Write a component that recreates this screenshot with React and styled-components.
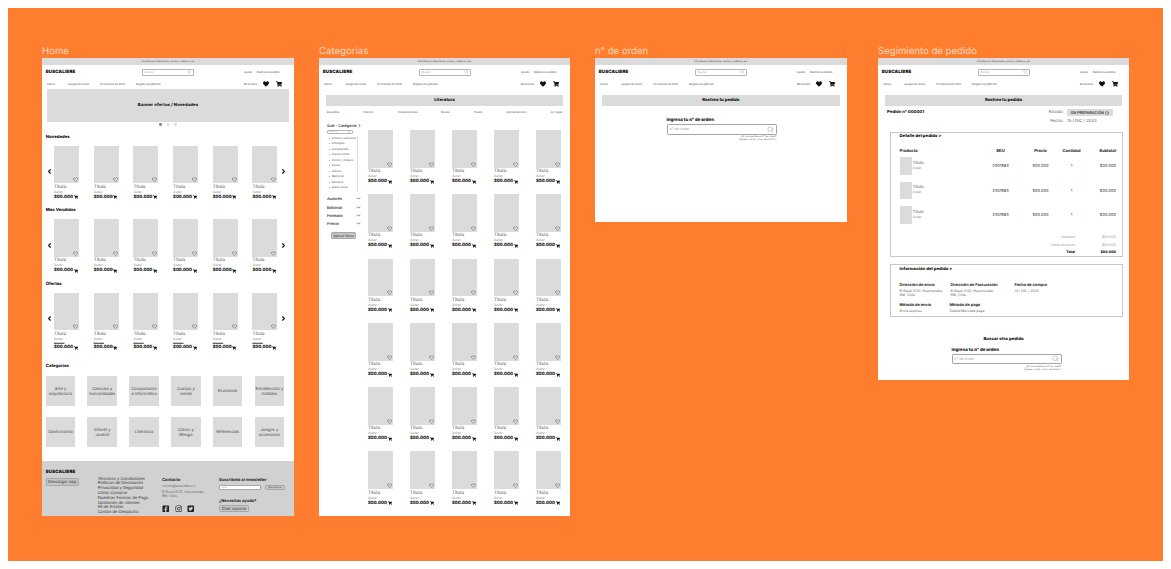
import React from "react";
import styled, { createGlobalStyle } from "styled-components";
import { ChevronLeft, ChevronRight, ChevronDown, Search, Heart, Clock } from "lucide-react";
import { FaHeart, FaShoppingCart, FaFacebookSquare, FaInstagram, FaTwitterSquare } from "react-icons/fa";

const Global = createGlobalStyle`
  html, body { background: #fff; }
  body {
    margin: 8px;
    font-family: "Inter", "Liberation Sans", sans-serif;
    color: #222;
    text-rendering: geometricPrecision;
  }
  * { box-sizing: border-box; }
`;

const Canvas = styled.div`
  position: relative;
  width: 1155px;
  height: 553px;
  background: #ff7d2f;
  overflow: hidden;
`;
const FrameWrap = styled.section`
  position: absolute;
  left: ${(p) => p.$x - 8}px;
  top: ${(p) => p.$y - 8}px;
  width: ${(p) => p.$w}px;
`;
const FrameTitle = styled.h2`
  position: absolute;
  left: 0;
  top: -13.5px;
  margin: 0;
  font-size: 9.6px;
  line-height: 13px;
  font-weight: 400;
  color: #ffd9bc;
  white-space: nowrap;
`;
const Sheet = styled.div`
  height: ${(p) => p.$h}px;
  background: #fff;
  overflow: hidden;
  display: flex;
  flex-direction: column;
`;
const Announce = styled.div`
  height: 7px;
  flex: none;
  background: #dbdbdb;
  font-size: 2.5px;
  line-height: 7px;
  text-align: center;
  color: #333;
`;
const TopRow = styled.div`
  height: 14px;
  flex: none;
  display: grid;
  grid-template-columns: 96.3px 102px 1fr;
  align-items: center;
  padding-left: 3.7px;
`;
const Logo = styled.div`
  font-size: 4.5px;
  line-height: 5px;
  font-weight: 900;
  letter-spacing: 0.1px;
  color: #111;
`;
const SearchBox = styled.div`
  width: 52px;
  height: 7px;
  border: 0.6px solid #b5b5b5;
  border-radius: 1px;
  display: flex;
  align-items: center;
  justify-content: space-between;
  padding: 0 1.5px;
  font-size: 2.8px;
  color: #aaa;
  svg { color: #aaa; }
`;
const TinyLinks = styled.div`
  display: flex;
  gap: 5px;
  font-size: 2.7px;
  color: #444;
  white-space: nowrap;
`;
const NavRow = styled.div`
  height: 10px;
  flex: none;
  display: grid;
  grid-template-columns: 21px 32px 36px 108px 1fr;
  align-items: center;
  padding-left: 5px;
  font-size: 2.7px;
  color: #444;
  white-space: nowrap;
`;
const NavRight = styled.div`
  display: flex;
  align-items: center;
  gap: 6.5px;
  svg { color: #111; }
`;

const Banner = styled.div`
  height: 32.5px;
  margin: 0 5px;
  flex: none;
  background: #dbdbdb;
  display: flex;
  align-items: center;
  justify-content: center;
  font-size: 4.2px;
  font-weight: 800;
  letter-spacing: 0.1px;
  color: #111;
`;
const Dots = styled.div`
  height: 6px;
  margin-bottom: 7.5px;
  flex: none;
  display: flex;
  justify-content: center;
  align-items: center;
  gap: 5.2px;
`;
const Dot = styled.span`
  width: 2.4px;
  height: 2.4px;
  border-radius: 50%;
  background: ${(p) => (p.$on ? "#888" : "#dbdbdb")};
`;
const SectionLabel = styled.h3`
  margin: ${(p) => p.$top || 0}px 0 ${(p) => p.$bottom}px 3.7px;
  font-size: 4.3px;
  line-height: 5px;
  font-weight: 800;
  color: #111;
`;
const Carousel = styled.div`
  display: flex;
  align-items: center;
  padding-left: 3px;
  svg { color: #111; flex: none; }
`;
const ArrowSlot = styled.div`
  width: ${(p) => p.$w}px;
  height: 37.5px;
  flex: none;
  align-self: flex-start;
  display: flex;
  align-items: center;
  justify-content: center;
  padding-top: 15px;
`;
const ProductRow = styled.div`
  display: flex;
  gap: 14.7px;
`;
const ProductGridWrap = styled.div`
  display: grid;
  grid-template-columns: repeat(5, 25px);
  column-gap: 17px;
  row-gap: 10.1px;
  align-content: start;
  margin-top: 8px;
`;
const Product = styled.article`
  width: 25px;
`;
const Cover = styled.div`
  position: relative;
  height: 37.7px;
  background: #dbdbdb;
  svg { position: absolute; right: 1px; bottom: 1px; color: #444; }
`;
const PTitle = styled.div`
  margin-top: 1.5px;
  font-size: 4.6px;
  line-height: 5px;
  color: #555;
`;
const PAuthor = styled.div`
  font-size: 3.4px;
  line-height: 5px;
  color: #888;
`;
const OldPrice = styled.div`
  font-size: 2.4px;
  line-height: 3.5px;
  font-weight: 700;
  color: #666;
  text-decoration: line-through;
`;
const PriceRow = styled.div`
  display: flex;
  align-items: center;
  justify-content: space-between;
  width: 23.5px;
  font-size: 4.3px;
  line-height: 5px;
  font-weight: 800;
  color: #111;
  white-space: nowrap;
  svg { color: #111; }
`;

const CategoryGrid = styled.div`
  display: grid;
  grid-template-columns: repeat(6, 29.6px);
  column-gap: 12.2px;
  row-gap: 11px;
  grid-auto-rows: 30px;
  margin: 0 0 14px 3.7px;
`;
const CategoryTile = styled.div`
  background: #dbdbdb;
  display: flex;
  align-items: center;
  justify-content: center;
  text-align: center;
  font-size: 4.1px;
  line-height: 5px;
  color: #444;
`;
const Footer = styled.footer`
  flex: 1;
  background: #d1d1d1;
  display: grid;
  grid-template-columns: 52px 64.3px 57px 1fr;
  padding-left: 3.7px;
`;
const FootCol = styled.div`
  padding-top: ${(p) => p.$top}px;
`;
const FootLink = styled.div`
  font-size: 4.15px;
  line-height: 4.8px;
  color: #333;
  white-space: nowrap;
`;
const FootHead = styled.div`
  margin-top: ${(p) => p.$top || 0}px;
  font-size: 4.05px;
  line-height: 5px;
  font-weight: 700;
  color: #222;
  white-space: nowrap;
`;
const FootSmall = styled.div`
  margin-top: ${(p) => p.$top || 0}px;
  font-size: 3.3px;
  line-height: 4px;
  color: #666;
  white-space: nowrap;
`;
const GrayButton = styled.div`
  display: flex;
  align-items: center;
  justify-content: center;
  height: ${(p) => p.$h}px;
  width: ${(p) => p.$w}px;
  margin-top: ${(p) => p.$top || 0}px;
  background: #c6c6c6;
  border: 0.5px solid #a8a8a8;
  border-radius: 1.2px;
  font-size: ${(p) => p.$fs}px;
  color: #333;
  white-space: nowrap;
`;
const SocialRow = styled.div`
  display: flex;
  gap: 5px;
  margin-top: 6.5px;
  padding-left: 0.5px;
  svg { color: #222; }
`;
const NewsRow = styled.div`
  display: flex;
  align-items: center;
  gap: 4px;
  margin-top: 2.5px;
`;
const NewsInput = styled.div`
  width: 42px;
  height: 5.4px;
  background: #fff;
  border: 0.4px solid #aaa;
  font-size: 2.2px;
  line-height: 4.6px;
  padding-left: 1.5px;
  color: #aaa;
`;

const PageBar = styled.div`
  height: 11px;
  margin: 6px 7px 0;
  flex: none;
  background: #dbdbdb;
  display: flex;
  align-items: center;
  justify-content: center;
  font-size: 4.3px;
  font-weight: 800;
  color: #111;
`;
const SubNav = styled.div`
  display: grid;
  grid-template-columns: 36px 35px 43px 33px 32px 45px auto;
  margin: 4px 0 0 8px;
  font-size: 2.6px;
  line-height: 5px;
  color: #555;
  white-space: nowrap;
`;
const CatBody = styled.div`
  display: flex;
  margin-top: 7px;
`;
const Sidebar = styled.aside`
  width: 49px;
  flex: none;
  padding-left: 8px;
`;
const FilterHead = styled.div`
  display: flex;
  align-items: center;
  justify-content: space-between;
  height: ${(p) => p.$h || 8.2}px;
  width: ${(p) => p.$w || 34}px;
  font-size: 3.9px;
  font-weight: 600;
  color: #333;
  white-space: nowrap;
  svg { color: #222; flex: none; }
`;
const MiniSearch = styled(SearchBox)`
  width: 26px;
  height: 4.8px;
  margin-top: 0.5px;
  font-size: 2.4px;
`;
const SubList = styled.ul`
  position: relative;
  list-style: none;
  margin: 1.5px 0 4px;
  padding: 0 0 0 4.7px;
  width: 31px;
  &::after {
    content: "";
    position: absolute;
    right: 0;
    top: 0;
    width: 1px;
    height: 100%;
    background: #ddd;
  }
`;
const SubItem = styled.li`
  position: relative;
  font-size: 2.6px;
  line-height: 5.5px;
  color: #555;
  white-space: nowrap;
  &::before {
    content: "";
    position: absolute;
    left: -2.8px;
    top: 2.2px;
    width: 1px;
    height: 1px;
    border-radius: 50%;
    background: #888;
  }
`;
const FilterAction = styled.div`
  margin: 4.5px 0 0 4px;
`;
const GridArea = styled.div`
  margin-left: 0;
`;

const FormBlock = styled.div`
  width: 110px;
  margin: ${(p) => p.$top}px 0 0 ${(p) => p.$left}px;
`;
const FormLabel = styled.div`
  font-size: 4.4px;
  line-height: 6px;
  font-weight: 800;
  color: #111;
  white-space: nowrap;
`;
const OrderInput = styled.div`
  height: 10.5px;
  border: 0.6px solid #a5a5a5;
  border-radius: 1.2px;
  display: flex;
  align-items: center;
  justify-content: space-between;
  padding: 0 1.2px 0 2px;
  font-size: 3.6px;
  color: #aaa;
  svg { color: #999; }
`;
const FormHint = styled.div`
  margin-top: 1.6px;
  text-align: right;
  font-size: 2.4px;
  line-height: 2.9px;
  color: #444;
`;

const OrderHead = styled.div`
  display: flex;
  justify-content: space-between;
  padding: 3px 16px 0 9px;
`;
const OrderId = styled.div`
  font-size: 4.2px;
  line-height: 7px;
  font-weight: 800;
  color: #111;
`;
const OrderMeta = styled.div`
  display: grid;
  grid-template-columns: auto 46px;
  column-gap: 3.5px;
  row-gap: 1.5px;
  grid-auto-rows: 7px;
  align-items: center;
  font-size: 4.2px;
  color: #555;
`;
const MetaLabel = styled.div`
  text-align: right;
`;
const Badge = styled.div`
  height: 7px;
  background: #dbdbdb;
  border-radius: 1px;
  display: flex;
  align-items: center;
  justify-content: center;
  gap: 1px;
  font-size: 3.8px;
  font-weight: 600;
  color: #333;
  white-space: nowrap;
`;
const InfoCard = styled.div`
  margin: ${(p) => p.$top}px 6.5px 0 12px;
  height: ${(p) => p.$h}px;
  border: 0.7px solid #c8c8c8;
  padding: ${(p) => p.$pad}px 5.5px 0 8.5px;
  flex: none;
`;
const CardTitle = styled.div`
  height: 6px;
  font-size: 4.3px;
  line-height: 6px;
  font-weight: 800;
  color: #111;
`;
const TableRow = styled.div`
  display: grid;
  grid-template-columns: 86px 30px 50px 12px 1fr;
  align-items: center;
  height: ${(p) => p.$h}px;
  margin-top: ${(p) => p.$top}px;
  font-size: ${(p) => (p.$head ? 4.1 : 4)}px;
  font-weight: ${(p) => (p.$head ? 700 : 400)};
  color: ${(p) => (p.$head ? "#222" : "#444")};
`;
const Cell = styled.div`
  justify-self: ${(p) => p.$align || "center"};
  white-space: nowrap;
`;
const ProductCell = styled.div`
  display: flex;
  align-items: center;
  gap: 1.3px;
`;
const Thumb = styled.div`
  width: 12px;
  height: 17.5px;
  background: #dbdbdb;
`;
const ThumbTitle = styled.div`
  font-size: 4.2px;
  line-height: 5px;
  color: #555;
`;
const ThumbAuthor = styled.div`
  font-size: 3.4px;
  line-height: 5px;
  color: #888;
`;
const Totals = styled.div`
  display: grid;
  grid-template-columns: 1fr 41px;
  grid-auto-rows: 7.25px;
  align-items: center;
  margin-top: 10.3px;
  font-size: 3.5px;
  color: #999;
  font-weight: 400;
  & > :nth-last-child(-n + 2) { color: #111; font-weight: 800; }
`;
const TotalCell = styled.div`
  text-align: right;
`;
const InfoRow = styled.div`
  display: flex;
  margin-top: ${(p) => p.$top}px;
`;
const InfoCol = styled.div`
  width: ${(p) => p.$w}px;
  flex: none;
`;
const InfoLabel = styled.div`
  font-size: 3.9px;
  line-height: 5px;
  font-weight: 700;
  color: #222;
  white-space: nowrap;
`;
const InfoText = styled.div`
  margin-top: 2px;
  font-size: 3.4px;
  line-height: 4px;
  color: #666;
  white-space: nowrap;
`;
const OtherTitle = styled.div`
  margin-top: 20px;
  text-align: center;
  font-size: 4.3px;
  line-height: 5px;
  font-weight: 800;
  color: #111;
`;

const Header = () => (
  <>
    <Announce>Información importante: envíos, cambios, etc</Announce>
    <TopRow>
      <Logo>BUSCALIBRE</Logo>
      <SearchBox>
        <span>Buscar</span>
        <Search size={4} strokeWidth={2} />
      </SearchBox>
      <TinyLinks>
        <span>Ayuda</span>
        <span>Rastrea tu pedido</span>
      </TinyLinks>
    </TopRow>
    <NavRow>
      <span>Libros</span>
      <span>Juegos de mesa</span>
      <span>Te Interesa de Chile</span>
      <span>Regala una giftcard</span>
      <NavRight>
        <span>Mi Cuenta</span>
        <FaHeart size={6} />
        <FaShoppingCart size={6} />
      </NavRight>
    </NavRow>
  </>
);

const ProductCard = ({ sale }) => (
  <Product>
    <Cover>
      <Heart size={5} strokeWidth={2} />
    </Cover>
    <PTitle>Título</PTitle>
    <PAuthor>Autor</PAuthor>
    {sale && <OldPrice>$00.000</OldPrice>}
    <PriceRow>
      <span>$00.000</span>
      <FaShoppingCart size={4} />
    </PriceRow>
  </Product>
);

const ProductCarousel = ({ sale }) => (
  <Carousel>
    <ArrowSlot $w={9}>
      <ChevronLeft size={7} strokeWidth={4} />
    </ArrowSlot>
    <ProductRow>
      {Array.from({ length: 6 }, (_, i) => (
        <ProductCard key={i} sale={sale} />
      ))}
    </ProductRow>
    <ArrowSlot $w={13}>
      <ChevronRight size={7} strokeWidth={4} />
    </ArrowSlot>
  </Carousel>
);

const CATEGORIES = [
  ["Arte y", "arquitectura"],
  ["Ciencias y", "humanidades"],
  ["Computación", "e informática"],
  ["Cuerpo y", "mente"],
  ["Economía"],
  ["Entretención y", "hobbies"],
  ["Gastronomía"],
  ["Infantil y", "Juvenil"],
  ["Literatura"],
  ["Cómic y", "Manga"],
  ["Referencias"],
  ["Juegos y", "accesorios"],
];
const LINKS = [
  "Términos y Condiciones",
  "Políticas de Devolución",
  "Privacidad y Seguridad",
  "Cómo Comprar",
  "Nuestras Formas de Pago",
  "Opiniones de clientes",
  "Fe de Erratas",
  "Costos de Despacho",
];

const HomeFrame = () => (
  <FrameWrap $x={42} $y={58} $w={252}>
    <FrameTitle>Home</FrameTitle>
    <Sheet $h={458}>
      <Header />
      <Banner>Banner ofertas / Novedades</Banner>
      <Dots>
        <Dot $on />
        <Dot />
        <Dot />
      </Dots>
      <SectionLabel $bottom={5.5}>Novedades</SectionLabel>
      <ProductCarousel />
      <SectionLabel $top={8.7} $bottom={5.8}>Más Vendidos</SectionLabel>
      <ProductCarousel />
      <SectionLabel $top={8.5} $bottom={5.8}>Ofertas</SectionLabel>
      <ProductCarousel sale />
      <SectionLabel $top={13.3} $bottom={7}>Categorías</SectionLabel>
      <CategoryGrid>
        {CATEGORIES.map((lines) => (
          <CategoryTile key={lines[0]}>
            <div>
              {lines.map((l) => (
                <div key={l}>{l}</div>
              ))}
            </div>
          </CategoryTile>
        ))}
      </CategoryGrid>
      <Footer>
        <FootCol $top={9.5}>
          <Logo>BUSCALIBRE</Logo>
          <GrayButton $w={33} $h={8} $fs={4.1} $top={2.5}>Descargar app</GrayButton>
        </FootCol>
        <FootCol $top={17}>
          {LINKS.map((l) => (
            <FootLink key={l}>{l}</FootLink>
          ))}
        </FootCol>
        <FootCol $top={16.5}>
          <FootHead>Contacto</FootHead>
          <FootSmall $top={2}>correo@buscalibre.cl</FootSmall>
          <FootSmall $top={2}>
            El Rosal 5125, Huechuraba,
            <br />
            RM, Chile.
          </FootSmall>
          <SocialRow>
            <FaFacebookSquare size={7.5} />
            <FaInstagram size={7.5} />
            <FaTwitterSquare size={7.5} />
          </SocialRow>
        </FootCol>
        <FootCol $top={16.5}>
          <FootHead>Suscríbete al newsletter</FootHead>
          <NewsRow>
            <NewsInput>Email</NewsInput>
            <GrayButton $w={20} $h={5.6} $fs={2.4}>Suscribirme</GrayButton>
          </NewsRow>
          <FootHead $top={7.5}>¿Necesitas ayuda?</FootHead>
          <GrayButton $w={30} $h={7.5} $fs={4} $top={2}>Chat soporte</GrayButton>
        </FootCol>
      </Footer>
    </Sheet>
  </FrameWrap>
);

const SUB_NAV = ["Biografías", "Clásicos", "Contemporáneo", "Novela", "Poesía", "Latinoamericana", "En inglés"];
const SUB_LIST = ["Artistas y escritores", "Antologías", "Autobiografía", "Ciencia ficción", "Ficción y misterio", "Poesía", "Historia", "Memorias", "Romance", "Adulto Joven"];
const FILTERS = ["Autores", "Editorial", "Formato", "Precio"];

const CategoriesFrame = () => (
  <FrameWrap $x={319} $y={58} $w={251}>
    <FrameTitle>Categorías</FrameTitle>
    <Sheet $h={458}>
      <Header />
      <PageBar>Literatura</PageBar>
      <SubNav>
        {SUB_NAV.map((s) => (
          <span key={s}>{s}</span>
        ))}
      </SubNav>
      <CatBody>
        <Sidebar>
          <FilterHead $h={7} $w={33}>
            <span>Sub - Categoría</span>
            <ChevronRight size={5} strokeWidth={3} />
          </FilterHead>
          <MiniSearch>
            <span>Buscar</span>
            <Search size={3.4} strokeWidth={2} />
          </MiniSearch>
          <SubList>
            {SUB_LIST.map((s) => (
              <SubItem key={s}>{s}</SubItem>
            ))}
          </SubList>
          {FILTERS.map((f) => (
            <FilterHead key={f}>
              <span>{f}</span>
              <ChevronDown size={5} strokeWidth={3} />
            </FilterHead>
          ))}
          <FilterAction>
            <GrayButton $w={25} $h={7} $fs={3.3}>Aplicar filtros</GrayButton>
          </FilterAction>
        </Sidebar>
        <GridArea>
          <ProductGridWrap>
            {Array.from({ length: 30 }, (_, i) => (
              <ProductCard key={i} />
            ))}
          </ProductGridWrap>
        </GridArea>
      </CatBody>
    </Sheet>
  </FrameWrap>
);

const OrderForm = ({ top, left }) => (
  <FormBlock $top={top} $left={left}>
    <FormLabel>Ingresa tu n° de orden</FormLabel>
    <OrderInput>
      <span>n° de orden</span>
      <Search size={7} strokeWidth={1.8} />
    </OrderInput>
    <FormHint>
      ¿No encuentras el n° de orden?
      <br />
      Ingresa con tu correo electrónico
    </FormHint>
  </FormBlock>
);

const TrackFrame = () => (
  <FrameWrap $x={595} $y={58} $w={251.6}>
    <FrameTitle>n° de orden</FrameTitle>
    <Sheet $h={163.7}>
      <Header />
      <PageBar>Rastrea tu pedido</PageBar>
      <OrderForm top={12} left={71.5} />
    </Sheet>
  </FrameWrap>
);

const OrderFrame = () => (
  <FrameWrap $x={878} $y={58} $w={251}>
    <FrameTitle>Segimiento de pedido</FrameTitle>
    <Sheet $h={322}>
      <Header />
      <PageBar>Rastrea tu pedido</PageBar>
      <OrderHead>
        <OrderId>Pedido n° 000001</OrderId>
        <OrderMeta>
          <MetaLabel>Estado:</MetaLabel>
          <Badge>
            EN PREPARACIÓN <Clock size={4} strokeWidth={2} />
          </Badge>
          <MetaLabel>Fecha:</MetaLabel>
          <span>15 / DIC / 2023</span>
        </OrderMeta>
      </OrderHead>
      <InfoCard $top={7} $h={125.5} $pad={1}>
        <CardTitle>Detalle del pedido &gt;</CardTitle>
        <TableRow $head $h={5} $top={8.5}>
          <Cell $align="start">Producto</Cell>
          <Cell>SKU</Cell>
          <Cell>Precio</Cell>
          <Cell>Cantidad</Cell>
          <Cell $align="end">Subtotal</Cell>
        </TableRow>
        {[0, 1, 2].map((i) => (
          <TableRow key={i} $h={17.5} $top={i ? 7 : 4}>
            <ProductCell>
              <Thumb />
              <div>
                <ThumbTitle>Título</ThumbTitle>
                <ThumbAuthor>Autor</ThumbAuthor>
              </div>
            </ProductCell>
            <Cell>2301863</Cell>
            <Cell>$00.000</Cell>
            <Cell>1</Cell>
            <Cell $align="end">$00.000</Cell>
          </TableRow>
        ))}
        <Totals>
          <TotalCell>Subtotal</TotalCell>
          <TotalCell>$00.000</TotalCell>
          <TotalCell>Costo de envío</TotalCell>
          <TotalCell>$00.000</TotalCell>
          <TotalCell>Total</TotalCell>
          <TotalCell>$00.000</TotalCell>
        </Totals>
      </InfoCard>
      <InfoCard $top={7} $h={53} $pad={2}>
        <CardTitle>Información del pedido &gt;</CardTitle>
        <InfoRow $top={8.5}>
          <InfoCol $w={51}>
            <InfoLabel>Dirección de envío</InfoLabel>
            <InfoText>
              El Rosal 5125, Huechuraba,
              <br />
              RM, Chile.
            </InfoText>
          </InfoCol>
          <InfoCol $w={64}>
            <InfoLabel>Dirección de Facturación</InfoLabel>
            <InfoText>
              El Rosal 5125, Huechuraba,
              <br />
              RM, Chile.
            </InfoText>
          </InfoCol>
          <InfoCol $w={40}>
            <InfoLabel>Fecha de compra</InfoLabel>
            <InfoText>14 / DIC / 2023</InfoText>
          </InfoCol>
        </InfoRow>
        <InfoRow $top={5}>
          <InfoCol $w={50}>
            <InfoLabel>Método de envío</InfoLabel>
            <InfoText>Envío express</InfoText>
          </InfoCol>
          <InfoCol $w={60}>
            <InfoLabel>Método de pago</InfoLabel>
            <InfoText>Debito/Mercado pago</InfoText>
          </InfoCol>
        </InfoRow>
      </InfoCard>
      <OtherTitle>Buscar otro pedido</OtherTitle>
      <OrderForm top={5.5} left={73.5} />
    </Sheet>
  </FrameWrap>
);

export default function App() {
  return (
    <>
      <Global />
      <Canvas>
        <HomeFrame />
        <CategoriesFrame />
        <TrackFrame />
        <OrderFrame />
      </Canvas>
    </>
  );
}
